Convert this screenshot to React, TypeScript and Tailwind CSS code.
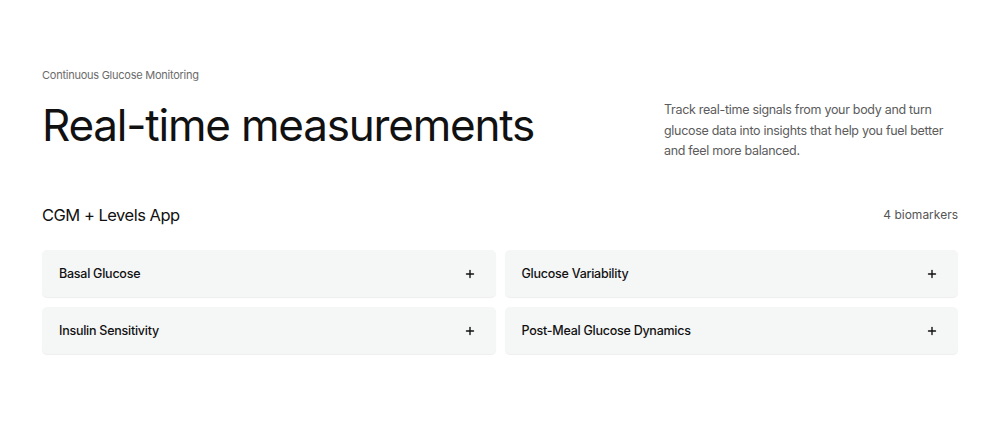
import { Plus } from 'lucide-react'

const BIOMARKERS = [
  'Basal Glucose',
  'Glucose Variability',
  'Insulin Sensitivity',
  'Post-Meal Glucose Dynamics',
]

export default function App() {
  return (
    <main
      className="min-h-screen bg-white px-[42px] pt-[68px] text-[#111]"
      style={{ fontFamily: 'Inter, "Noto Sans", sans-serif' }}
    >
      {/* Header */}
      <div className="flex items-start justify-between">
        <div>
          <p className="text-[11px] leading-[14px] tracking-[-0.25px] text-[#6b6b6b]">
            Continuous Glucose Monitoring
          </p>
          <h1 className="mt-[16px] text-[44px] font-normal leading-[54px] tracking-[-1.2px] text-[#111]">
            Real-time measurements
          </h1>
        </div>
        <p className="mt-[32px] w-[294px] text-[12.5px] leading-[20.5px] tracking-[-0.3px] text-[#5c5c5c]">
          Track real-time signals from your body and turn glucose data into insights that help you fuel better
          and feel more balanced.
        </p>
      </div>

      {/* Section header */}
      <div className="mt-[42px] flex items-center justify-between">
        <h2 className="text-[16.5px] leading-[22px] tracking-[-0.5px] text-[#111]">CGM + Levels App</h2>
        <span className="text-[12px] text-[#555]">4 biomarkers</span>
      </div>

      {/* Cards */}
      <div className="mt-[24px] grid grid-cols-2 gap-x-[9px] gap-y-[10px]">
        {BIOMARKERS.map(name => (
          <button
            key={name}
            className="flex h-[47px] items-center justify-between rounded-[5px] bg-[#f5f6f6] pl-[17px] pr-[20px] pt-[2px] text-left shadow-[0_1px_1px_rgba(0,0,0,0.07)]"
          >
            <span className="text-[12.5px] font-medium tracking-[-0.25px] text-[#111]">{name}</span>
            <Plus size={12} strokeWidth={2.75} className="text-[#111]" />
          </button>
        ))}
      </div>
    </main>
  )
}
